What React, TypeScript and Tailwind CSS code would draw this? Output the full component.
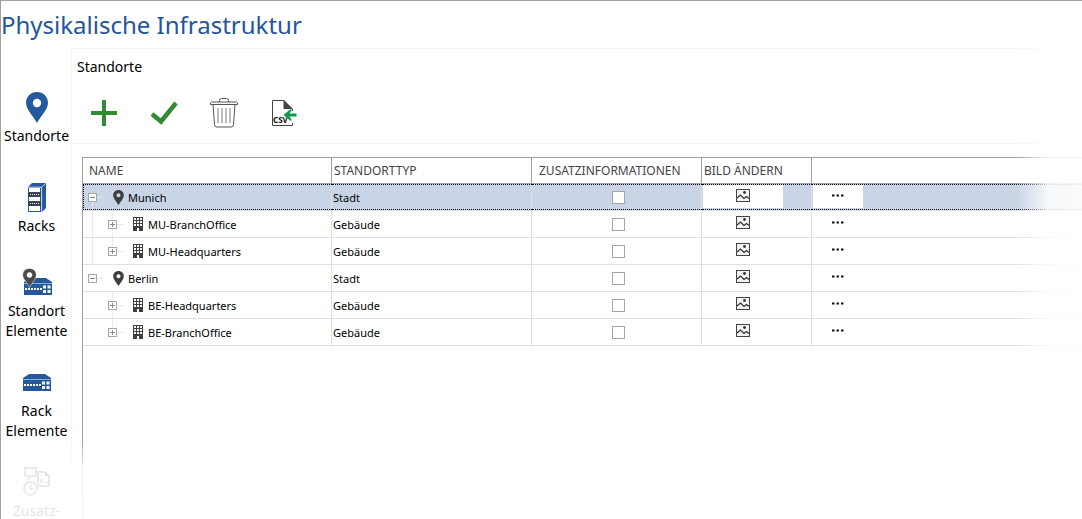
import React from "react";
import clsx from "clsx";

const PinIcon = ({ className }: { className?: string }) => (
  <svg viewBox="0 0 22 31" className={className} aria-hidden="true">
    <path
      fill="currentColor"
      fillRule="evenodd"
      d="M11 0C4.900 0 0 4.700 0 10.600C0 18 7.500 24.500 11 31C14.500 24.500 22 18 22 10.600C22 4.700 17.100 0 11 0ZM11 6.800A4.200 4.200 0 1 1 11 15.200A4.200 4.200 0 1 1 11 6.800Z"
    />
  </svg>
);

const RackIcon = () => (
  <svg viewBox="0 0 18 29" className="h-[29px] w-[18px]" aria-hidden="true">
    <path fill="#24599e" d="M0 4L4 0H18V25L14 29H0Z" />
    <path stroke="#fff" strokeWidth="0.800" fill="none" d="M0 4.200H13.600V29M13.600 4.200L17.500 0.400" />
    <path fill="#fff" d="M1 5H12V9H1ZM1 14H12V18H1ZM1 23H12V28H1Z" />
    <path fill="#3c3c3c" d="M0 9.500H13V13.500H0ZM0 18.500H13V22.500H0Z" />
    <path stroke="#fff" strokeDasharray="1 1" d="M2 11.500H12M2 20.500H12" />
  </svg>
);

const DevicePaths = () => (
  <>
    <path fill="#24599e" d="M6 0H22L28 4V5H0V4ZM0 5.500H28V17H0Z" />
    <path stroke="#fff" strokeWidth="2" strokeDasharray="2 1" d="M1 11H18" />
    <path fill="#fff" d="M19 7.500H22V10.500H19ZM23.500 7.500H26.500V10.500H23.500ZM19 12H22V15H19ZM23.500 12H26.500V15H23.500Z" />
  </>
);

const DeviceIcon = () => (
  <svg viewBox="0 0 28 17" className="h-[17px] w-7" aria-hidden="true">
    <DevicePaths />
  </svg>
);

const SiteDeviceIcon = () => (
  <svg viewBox="0 0 30 28" className="h-7 w-[30px]" aria-hidden="true">
    <g transform="translate(2 10)">
      <DevicePaths />
    </g>
    <path
      fill="#4a4a4a"
      fillRule="evenodd"
      stroke="#fff"
      strokeWidth="0.500"
      d="M7.500 0.500C3.500 0.500 0.700 3.300 0.700 7C0.700 11 5.500 15 7.500 19.500C9.500 15 14.300 11 14.300 7C14.300 3.300 11.500 0.500 7.500 0.500ZM7.500 4.500A2.500 2.500 0 1 1 7.500 9.500A2.500 2.500 0 1 1 7.500 4.500Z"
    />
  </svg>
);

const ExtraIcon = () => (
  <svg viewBox="0 0 28 30" className="h-[30px] w-7" fill="none" strokeWidth="1.500" aria-hidden="true">
    <path stroke="#24599e" d="M2 1H13V9H8L5.500 12V9H2Z" />
    <path stroke="#3c3c3c" d="M15 5H22L26 9V19H15Z" />
    <path fill="#3c3c3c" d="M22 5L26 9H22Z" />
    <path stroke="#3c3c3c" strokeWidth="1" d="M17 12L20 16M20 12L17 16M21 16H25" />
    <circle cx="7.500" cy="21.500" r="6.500" stroke="#24599e" fill="#fff" />
    <path stroke="#24599e" d="M7.500 17.500V22H11" />
  </svg>
);

const PlusIcon = () => (
  <svg viewBox="0 0 26 26" className="h-[26px] w-[26px]" aria-hidden="true">
    <path fill="#328b32" d="M11 0H15V11H26V15H15V26H11V15H0V11H11Z" />
  </svg>
);

const CheckIcon = () => (
  <svg viewBox="0 0 28 26" className="h-[26px] w-7" aria-hidden="true">
    <path fill="none" stroke="#328b32" strokeWidth="4.500" d="M2 14L11 21.500L26 3" />
  </svg>
);

const TrashIcon = () => (
  <svg viewBox="0 0 28 30" className="h-[30px] w-7" fill="none" stroke="#555" aria-hidden="true">
    <path d="M9.500 4V2.500Q9.500 0.500 11.500 0.500H16.500Q18.500 0.500 18.500 2.500V4" />
    <path d="M1.500 4H26.500Q27.500 4 27.500 6.500H0.500Q0.500 4 1.500 4Z" />
    <path d="M3 6.500L4.500 26.500Q4.700 29 7 29H21Q23.300 29 23.500 26.500L25 6.500" />
    <path stroke="#bdbdbd" strokeWidth="2" d="M8 10V25M12 10V25M16 10V25M20 10V25" />
  </svg>
);

const CsvIcon = () => (
  <svg viewBox="0 0 26 28" className="h-7 w-[26px]" aria-hidden="true">
    <path fill="none" stroke="#444" d="M13 1.500H1.500V26.500H21.500V24M21.500 10V12" />
    <path fill="#444" d="M12.500 1H13L22 10H12.500Z" />
    <text x="2" y="24" fontSize="8" fontWeight="700" fill="#111" className="font-['Noto_Sans']">
      CSV
    </text>
    <path fill="#0c9b4b" d="M12.500 16L19 10.500H21L18.500 14.500H25.500V17.500H18.500L21 21.500H19Z" />
  </svg>
);

const BuildingIcon = () => (
  <svg viewBox="0 0 10 14" className="h-3.5 w-2.5" aria-hidden="true">
    <path fill="#3f3f3f" d="M0 0H10V14H6V11H4V14H0Z" />
    <path
      fill="#fff"
      d="M1 1H3V3H1ZM4 1H6V3H4ZM7 1H9V3H7ZM1 4H3V6H1ZM4 4H6V6H4ZM7 4H9V6H7ZM1 7H3V9H1ZM4 7H6V9H4ZM7 7H9V9H7Z"
    />
  </svg>
);

const PictureIcon = () => (
  <svg viewBox="0 0 14 13" className="h-[13px] w-3.5" aria-hidden="true">
    <rect x="0.500" y="0.500" width="13" height="12" fill="#f3f3f3" stroke="#444" />
    <path fill="none" stroke="#333" strokeWidth="1.200" d="M1 9L4.500 6L8 9.500L10.500 7.500L13 9.500" />
    <circle cx="8.500" cy="3.500" r="1.400" fill="#333" />
  </svg>
);

const DotsIcon = () => (
  <svg viewBox="0 0 12 3" className="h-[3px] w-3" aria-hidden="true">
    <path fill="#111" d="M0 0.500H2.500V2.500H0ZM4.500 0.500H7V2.500H4.500ZM9 0.500H11.500V2.500H9Z" />
  </svg>
);

const navItems = [
  {
    lines: ["Standorte"],
    height: "h-[90px]",
    icon: <PinIcon className="h-[31px] w-[22px] text-[#24599e]" />,
  },
  { lines: ["Racks"], height: "h-[85px]", icon: <RackIcon /> },
  { lines: ["Standort", "Elemente"], height: "h-[100px]", icon: <SiteDeviceIcon /> },
  { lines: ["Rack", "Elemente"], height: "h-[100px]", icon: <DeviceIcon /> },
  { lines: ["Zusatz-"], height: "h-auto", icon: <ExtraIcon /> },
];

const tools = [
  { label: "Hinzufügen", icon: <PlusIcon /> },
  { label: "Übernehmen", icon: <CheckIcon /> },
  { label: "Löschen", icon: <TrashIcon /> },
  { label: "CSV importieren", icon: <CsvIcon /> },
];

type Site = {
  name: string;
  type: string;
  level: 0 | 1;
  selected?: boolean;
  // whether the root / child guide line continues below this row
  rootLine?: boolean;
  lastChild?: boolean;
};

const sites: Site[] = [
  { name: "Munich", type: "Stadt", level: 0, selected: true, rootLine: true },
  { name: "MU-BranchOffice", type: "Gebäude", level: 1, rootLine: true },
  { name: "MU-Headquarters", type: "Gebäude", level: 1, rootLine: true, lastChild: true },
  { name: "Berlin", type: "Stadt", level: 0 },
  { name: "BE-Headquarters", type: "Gebäude", level: 1 },
  { name: "BE-BranchOffice", type: "Gebäude", level: 1, lastChild: true },
];

const Toggle = ({ open, label }: { open: boolean; label: string }) => (
  <button
    type="button"
    aria-label={label}
    aria-expanded={open}
    className="relative flex h-[9px] w-[9px] items-center justify-center border border-[#a6a6a6] bg-white"
  >
    <span className="h-px w-[5px] bg-[#8a8a8a]" />
    {!open && <span className="absolute h-[5px] w-px bg-[#8a8a8a]" />}
  </button>
);

const NameCell = ({ site }: { site: Site }) => {
  const child = site.level === 1;
  return (
    <div className="flex h-[26px] items-center">
      {child && (
        <span className="flex h-full w-5 pl-[9px]">
          {site.rootLine && <span className="h-full w-px bg-[#ebebeb]" />}
        </span>
      )}
      <span className="relative flex h-full w-5 items-center pl-[5px]">
        <span className="absolute right-0 top-[13px] h-px w-[6px] bg-[#e6e6e6]" />
        {child && (
          <span
            className={clsx(
              "absolute left-[9px] top-0 w-px bg-[#ebebeb]",
              site.lastChild ? "h-[13px]" : "h-full"
            )}
          />
        )}
        {!child && site.rootLine && (
          <span className="absolute bottom-0 left-[9px] h-[13px] w-px bg-[#ebebeb]" />
        )}
        <Toggle open={!child} label={site.name} />
      </span>
      <span className="ml-[7px] flex w-4 justify-center">
        {child ? <BuildingIcon /> : <PinIcon className="h-[15px] w-[11px] text-[#3f3f3f]" />}
      </span>
      <span className="pl-0.5 pt-0.5">{site.name}</span>
    </div>
  );
};

const Sidebar = () => (
  <nav className="w-[70px] shrink-0 pl-px pt-[43px]">
    {navItems.map((item) => (
      <button
        key={item.lines.join("")}
        type="button"
        className={clsx(
          "flex w-full flex-col items-center gap-[3px] text-[14px] leading-5",
          item.height
        )}
      >
        <span className="flex h-8 items-center">{item.icon}</span>
        <span>
          {item.lines.map((line) => (
            <span key={line} className="block">
              {line}
            </span>
          ))}
        </span>
      </button>
    ))}
  </nav>
);

const headCell = "h-[26px] border-b border-r border-[#a0a0a0] text-left font-normal";
const bodyCell = "h-[27px] border-b border-r border-[#e0e0e0] p-0";
const actionButton = "ml-px mt-px flex h-[23px] items-center justify-center bg-white pb-0.5";

// dotted focus frame of the current row, drawn cell by cell
const selectedRow =
  "bg-[#c9d5e6] [&>td]:relative [&>td]:after:pointer-events-none [&>td]:after:absolute [&>td]:after:bottom-0 [&>td]:after:left-0 [&>td]:after:-right-px [&>td]:after:top-0 [&>td]:after:border-y [&>td]:after:border-dotted [&>td]:after:border-black [&>td:first-child]:after:border-l";

const SiteTable = () => (
  <table className="w-full table-fixed border-separate border-spacing-0 text-[11px] leading-4">
    <colgroup>
      <col className="w-[249px]" />
      <col className="w-[200px]" />
      <col className="w-[170px]" />
      <col className="w-[110px]" />
      <col />
    </colgroup>
    <thead className="text-[12px] text-[#444]">
      <tr>
        <th className={clsx(headCell, "pl-1.5")}>NAME</th>
        <th className={clsx(headCell, "pl-0.5")}>STANDORTTYP</th>
        <th className={clsx(headCell, "pl-[7px]")}>ZUSATZINFORMATIONEN</th>
        <th className={clsx(headCell, "pl-0.5")}>BILD ÄNDERN</th>
        <th className="h-[26px] border-b border-[#a0a0a0]" aria-label="Aktionen" />
      </tr>
    </thead>
    <tbody>
      {sites.map((site) => (
        <tr key={site.name} className={clsx(site.selected && selectedRow)}>
          <td className={bodyCell}>
            <NameCell site={site} />
          </td>
          <td className={clsx(bodyCell, "pl-px pt-0.5")}>{site.type}</td>
          <td className={bodyCell}>
            <span className="flex justify-center pl-1">
              <input
                type="checkbox"
                aria-label={`Zusatzinformationen ${site.name}`}
                className="h-[13px] w-[13px] appearance-none border border-[#a6a6a6] bg-white checked:bg-[#24599e]"
              />
            </span>
          </td>
          <td className={clsx(bodyCell, "align-top")}>
            <button
              type="button"
              aria-label={`Bild ändern ${site.name}`}
              className={clsx(actionButton, "w-20")}
            >
              <PictureIcon />
            </button>
          </td>
          <td className="h-[27px] border-b border-[#e0e0e0] p-0 align-top">
            <button
              type="button"
              aria-label={`Mehr ${site.name}`}
              className={clsx(actionButton, "w-[50px]")}
            >
              <DotsIcon />
            </button>
          </td>
        </tr>
      ))}
    </tbody>
  </table>
);

const App = () => {
  return (
    <div className="relative flex h-screen flex-col overflow-hidden border-l border-t border-[#a0a0a0] bg-white font-['Noto_Sans',sans-serif] text-black">
      <h1 className="h-[47px] shrink-0 pt-1.5 text-[24px] leading-9 text-[#24559c]">
        Physikalische Infrastruktur
      </h1>
      <div className="flex min-h-0 flex-1">
        <Sidebar />
        <main className="flex min-w-0 flex-1 flex-col border-l border-t border-[#f4f4f4]">
          <h2 className="flex h-9 shrink-0 items-center pl-[5px] text-[14px] leading-5">
            Standorte
          </h2>
          <div className="flex shrink-0 border-b border-[#f4f4f4] pb-0.5 pl-0.5">
            {tools.map((tool) => (
              <button
                key={tool.label}
                type="button"
                aria-label={tool.label}
                className="flex h-14 w-[60px] items-center justify-center"
              >
                {tool.icon}
              </button>
            ))}
          </div>
          <div className="ml-2.5 mt-[13px] flex-1 border-l border-t border-[#a0a0a0]">
            <SiteTable />
          </div>
        </main>
      </div>
      <div className="pointer-events-none absolute -top-px bottom-0 right-0 w-[66px] bg-linear-to-r from-transparent via-white/85 via-50% to-white/90" />
      <div className="pointer-events-none absolute -left-px bottom-0 right-0 h-[78px] bg-linear-to-b from-transparent via-white/85 via-35% to-white/90" />
    </div>
  );
};

export default App;
